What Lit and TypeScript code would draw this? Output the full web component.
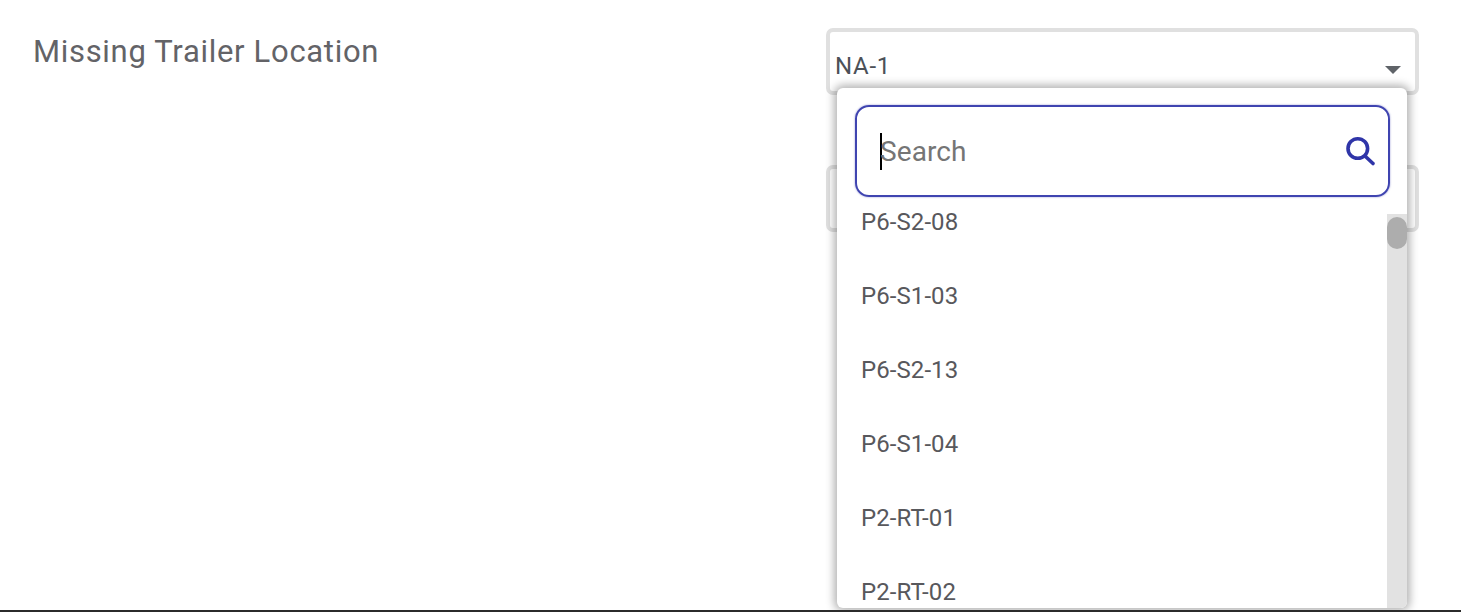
import { LitElement, html, css } from "lit";
import { customElement } from "lit/decorators.js";

const items = ["P6-S2-08", "P6-S1-03", "P6-S2-13", "P6-S1-04", "P2-RT-01", "P2-RT-02"];

@customElement("app-root")
export class AppRoot extends LitElement {
  static styles = css`
    :host {
      display: block;
      height: 612px;
      width: 1461px;
      box-sizing: border-box;
      overflow: hidden;
      background: #fff;
      font-family: Roboto, "Liberation Sans", sans-serif;
    }
    .page {
      box-sizing: border-box;
      height: 612px;
      border-bottom: 2px solid #2b2b2b;
      display: flex;
      justify-content: space-between;
      padding: 28px 42px 0 33px;
      overflow: hidden;
    }
    .label {
      font-size: 31px;
      line-height: 46px;
      letter-spacing: 0.69px;
      color: #636367;
      padding-top: 1px;
    }
    .fields {
      width: 593px;
      display: flex;
      flex-direction: column;
      gap: 70px;
      position: relative;
    }
    .select {
      box-sizing: border-box;
      height: 67px;
      border: 4px solid #e0e0e0;
      border-radius: 7px;
      display: flex;
      align-items: flex-end;
      justify-content: space-between;
      padding: 0 14px 11px 5px;
      flex: none;
    }
    .value {
      font-size: 24px;
      line-height: 28px;
      letter-spacing: 0.7px;
      color: #4c5158;
    }
    .caret {
      width: 0;
      height: 0;
      border-left: 8px solid transparent;
      border-right: 8px solid transparent;
      border-top: 8px solid #5f6368;
      margin-bottom: 6px;
    }
    .menu {
      position: absolute;
      left: 11px;
      top: 60px;
      width: 570px;
      height: 520px;
      background: #fff;
      border-radius: 6px;
      box-shadow: 0 0 8px 3px rgba(0, 0, 0, 0.3);
      display: flex;
      flex-direction: column;
      overflow: hidden;
    }
    .search {
      box-sizing: border-box;
      flex: none;
      margin: 17px 17px 0 18px;
      height: 92px;
      border: 2px solid #3f44b0;
      border-radius: 14px;
      display: flex;
      align-items: center;
      justify-content: space-between;
      padding: 0 12px 0 23px;
      box-shadow: 0 0 2px rgba(63, 68, 176, 0.6);
    }
    .ph {
      font-size: 28px;
      line-height: 36px;
      color: #757575;
      border-left: 2px solid #000;
      height: 36px;
      display: block;
      padding-top: 1px;
      letter-spacing: 0.1px;
      text-indent: -2px;
    }
    .body {
      flex: 1;
      min-height: 0;
      margin-top: 7px;
      display: flex;
      overflow: hidden;
    }
    .list {
      flex: 1;
      overflow: hidden;
      padding-left: 24px;
    }
    .item {
      height: 74px;
      display: flex;
      align-items: center;
      font-size: 24px;
      letter-spacing: 0.08px;
      color: #58585c;
    }
    .item:first-child {
      height: 36px;
      margin-bottom: 19px;
    }
    .track {
      width: 20px;
      background: #e2e2e2;
      flex: none;
      margin-top: 10px;
      padding-top: 3px;
      box-sizing: border-box;
    }
    .thumb {
      height: 32px;
      background: #adadad;
      border-radius: 10px;
    }
  `;

  render() {
    return html`
      <div class="page">
        <div class="label">Missing Trailer Location</div>
        <div class="fields">
          <div class="select">
            <span class="value">NA-1</span>
            <span class="caret"></span>
          </div>
          <div class="select"></div>
          <div class="menu">
            <div class="search">
              <span class="ph">Search</span>
              <svg width="32" height="32" viewBox="0 0 32 32" fill="none" stroke="#2f35a8" stroke-width="3.6" stroke-linecap="round">
                <circle cx="13.8" cy="13.5" r="9.8"></circle>
                <path d="M21.5 21.5l7.5 7"></path>
              </svg>
            </div>
            <div class="body">
              <div class="list">
                ${items.map((i) => html`<div class="item">${i}</div>`)}
              </div>
              <div class="track"><div class="thumb"></div></div>
            </div>
          </div>
        </div>
      </div>
    `;
  }
}
